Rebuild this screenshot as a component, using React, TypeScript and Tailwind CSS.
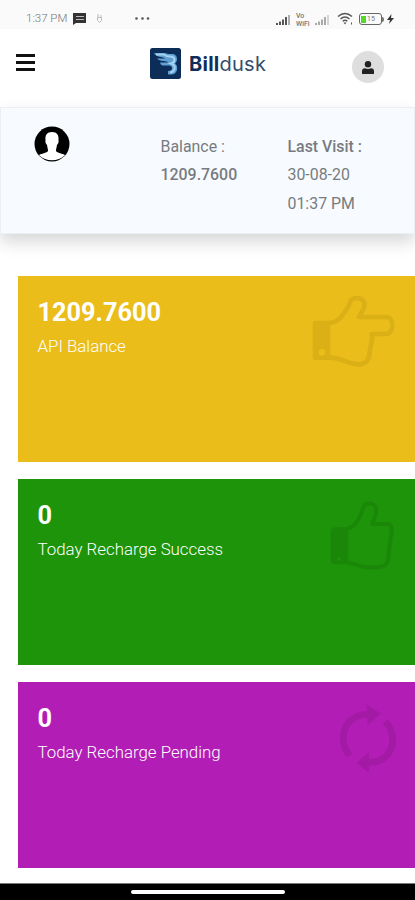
import React from 'react';

interface StatCardProps {
  value: string;
  label: string;
  className: string;
  children: React.ReactNode;
}

const StatCard: React.FC<StatCardProps> = ({ value, label, className, children }) => {
  return (
    <div className={`h-[186px] flex justify-between pl-5 pt-5 text-white ${className}`}>
      <div>
        <h2 className="text-[25.3px] leading-[34px] font-bold">{value}</h2>
        <p className="text-[16.85px] leading-[33px] font-light whitespace-nowrap">{label}</p>
      </div>
      {children}
    </div>
  );
};

const HandRightIcon = () => (
  <svg className="w-[83px] h-[71px] mr-5 text-[#dbb016]" viewBox="36 33 249 213" fill="none" stroke="currentColor">
    <path fill="currentColor" stroke="none" fillRule="evenodd" d="M46 107H91V225H46Q38 225 38 217V115Q38 107 46 107ZM66 192A10 10 0 1 0 66 212A10 10 0 1 0 66 192Z" />
    <path strokeWidth="14" strokeLinejoin="round" d="M90 113C117 112 126 92 142 70C151 57 149 39 171 39C190 40 198 54 191 70L177 96H258C270 96 277 106 277 121C277 139 268 147 256 147H215C221 165 211 180 210 195C209 218 202 236 182 238C150 240 120 217 90 218" />
  </svg>
);

const ThumbsUpIcon = () => (
  <svg className="w-[65px] h-[72px] mt-0.5 mr-5 text-[#1b8709]" viewBox="90 30 195 216" fill="none" stroke="currentColor">
    <path fill="currentColor" stroke="none" fillRule="evenodd" d="M108 109H145V220H104Q92 220 92 208V126Q92 109 108 109ZM117 197A6 6 0 1 0 117 209A6 6 0 1 0 117 197Z" />
    <path strokeWidth="12" strokeLinejoin="round" d="M142 112C166 108 176 87 182 70C190 59 187 38 205 37C228 36 232 57 226 75L216 99H261C274 99 277 110 275 124C270 142 272 158 267 176C264 192 268 215 253 224C235 233 218 228 199 229C180 229 165 216 142 215" />
  </svg>
);

const RefreshIcon = () => (
  <svg className="w-14 h-[69px] mt-0.5 mr-[19px] text-[#a31aa5]" viewBox="120 40 168 207" fill="none" stroke="currentColor">
    <path strokeWidth="20" d="M149 195C121 162 126 116 149 92C164 77 181 71 205 71M256 93C281 119 285 159 266 187C253 207 232 215 206 215" />
    <path fill="currentColor" stroke="none" d="M200 41L243 69L203 103ZM169 217L207 184V246Z" />
  </svg>
);

const Signal = ({ className }: { className: string }) => (
  <svg className={className} viewBox="0 0 16 12" fill="currentColor">
    <path d="M0 9h2v2H0zM3 7.5h2V11H3zM6 5.5h2V11H6zM9 3h2v8H9z" />
    <path opacity=".45" d="M12 1h2v10h-2z" />
  </svg>
);

const StatusBar = () => (
  <div className="h-[29px] bg-[#fafafa] flex items-start pt-3 text-[#555]">
    <span className="ml-[26px] w-[42px] text-[11.5px] leading-[13px] text-[#777] font-light whitespace-nowrap">1:37 PM</span>
    <svg className="ml-[5px] mt-[1px] w-[13px] h-3" viewBox="0 0 13 12">
      <path fill="#333" d="M0 0h13v10H3l-3 2z" />
      <path stroke="#bbb" d="M3 3.5h8M3 6.5h8" />
    </svg>
    <svg className="ml-[10px] mt-[2px] w-[7px] h-[9px]" viewBox="0 0 7 9" fill="none" stroke="#bbb">
      <path d="M2 0v3M5 1v2M1.5 3.5h4v3l-2 2-2-2z" />
    </svg>
    <svg className="ml-[32px] mt-[5px] w-[15px] h-[3px]" viewBox="0 0 15 3" fill="#555">
      <circle cx="1.5" cy="1.5" r="1.3" />
      <circle cx="7.5" cy="1.5" r="1.3" />
      <circle cx="13" cy="1.5" r="1.3" />
    </svg>
    <Signal className="ml-[126px] mt-[2px] w-4 h-3 shrink-0" />
    <div className="ml-[4px] w-[15px] flex flex-col text-[7px] leading-[8px] font-medium text-[#777]">
      <span>Vo</span>
      <span>WiFi</span>
    </div>
    <Signal className="ml-[4px] mt-[2px] w-4 h-3 shrink-0 text-[#aaa]" />
    <svg className="ml-[6px] w-4 h-[14px] shrink-0" viewBox="0 0 16 14" fill="none" stroke="#555" strokeWidth="1.4">
      <path d="M1 4.5Q8-1.5 15 4.5M3.5 7Q8 3 12.5 7M5.7 9.2Q8 7.2 10.3 9.2" />
      <path fill="#555" stroke="none" d="M6.5 10.5h3L8 12.5z" />
      <path strokeWidth="1" d="M14.5 10.5v2" />
    </svg>
    <div className="ml-[6px] mt-[1px] w-[23px] h-3 shrink-0 border-[1.5px] border-[#666] rounded-[3px] flex items-center">
      <span className="ml-px w-[5px] h-[7px] bg-[#55d827]" />
      <span className="text-[7px] leading-[8px] text-[#777] ml-px">15</span>
    </div>
    <span className="mt-[5px] w-[2px] h-[5px] bg-[#777] rounded-r-sm" />
    <svg className="ml-[3px] mt-[1px] w-[7px] h-3 shrink-0" viewBox="0 0 7 12" fill="#333">
      <path d="M4.5 1L0 7h3L2 11l5-6H4z" />
    </svg>
  </div>
);

const Logo = () => (
  <div className="flex items-center">
    <svg className="w-[31px] h-[31px]" viewBox="0 0 31 31">
      <rect width="31" height="31" rx="2.5" fill="#0c2d57" />
      <path fill="#5f9fd2" d="M4 5H14C16 5 17 6 19 6H22C25 6 27 8 27 11C27 13 26 14.5 25 15.5C27 17 27.5 19 27 22C26 25 24 26.5 21 26.5H18V23C21 23 22 22 22 20C22 18 20 17.5 18 17.5H13C11 17.5 10.5 16 10 14.5H18C18 12.5 9 14 7 10.5H15C13 8.5 6 9.5 4 5Z" />
      <path fill="none" stroke="#a4d2f0" strokeWidth="2" d="M6 6.5H14Q17 9 21 8.5Q24.5 9 24.5 12Q24 15 21 15.5Q25 17 24.7 20Q24 24 20 24.5" />
    </svg>
    <span className="ml-[8px] font-['Inter',sans-serif] text-[20px] leading-[24px] tracking-[0.25px] text-[#344d6b]">
      <b className="font-bold text-[#102e5a]">Bill</b>dusk
    </span>
  </div>
);

const Header = () => (
  <header className="h-[78px] bg-white flex items-start pt-[19px]">
    <button className="ml-4 mt-[6px] w-[19px] flex flex-col gap-1" aria-label="Menu">
      <span className="h-[3px] w-full bg-[#111]" />
      <span className="h-[3px] w-full bg-[#111]" />
      <span className="h-[3px] w-full bg-[#111]" />
    </button>
    <div className="ml-[115px] w-[202px]">
      <Logo />
    </div>
    <div className="mt-[3px] w-8 h-8 rounded-full bg-[#dedede] flex items-center justify-center">
      <svg className="w-3 h-[13px]" viewBox="0 0 12 13" fill="#222">
        <circle cx="6" cy="3.2" r="3.2" />
        <path d="M0 13V10.5Q0 7.3 3 7.3Q6 8.6 9 7.3Q12 7.3 12 10.5V13Z" />
      </svg>
    </div>
  </header>
);

const AccountPanel = () => (
  <section className="h-[127px] bg-[#f7fbff] border border-[#eceff2] shadow-[0_8px_16px_rgba(0,0,0,0.16)] flex text-[15.9px] leading-[28.5px] text-[#777b80]">
    <div className="w-[159.5px] pl-[33px] pt-[18px]">
      <svg className="w-9 h-9" viewBox="0 0 36 36">
        <circle cx="18" cy="18" r="17.5" fill="#000" />
        <path fill="#fff" d="M18 6C23 6 25 9 24.5 14C25 16 24 18 23 19C22.5 22 22 23 22 25C23 27 29 27.5 31 29.2C24 36 12 36 5 29.2C7 27.5 13 27 14 25C14 23 13.5 22 13 19C12 18 11 16 11.5 14C11 9 13 6 18 6Z" />
      </svg>
    </div>
    <div className="w-[127px] pt-[24.5px]">
      <p>Balance :</p>
      <p className="font-medium">1209.7600</p>
    </div>
    <div className="pt-[24.5px]">
      <p className="font-medium">Last Visit :</p>
      <p>30-08-20</p>
      <p>01:37 PM</p>
    </div>
  </section>
);

export default function App() {
  return (
    <div className="h-[900px] flex flex-col overflow-hidden bg-white font-['Roboto',sans-serif]">
      <StatusBar />
      <Header />
      <AccountPanel />
      <main className="flex-1 mt-[41.5px] pl-[17.5px] flex flex-col gap-[17px]">
        <StatCard value="1209.7600" label="API Balance" className="bg-[#eabd1b]">
          <HandRightIcon />
        </StatCard>
        <StatCard value="0" label="Today Recharge Success" className="bg-[#1d940a]">
          <ThumbsUpIcon />
        </StatCard>
        <StatCard value="0" label="Today Recharge Pending" className="bg-[#b21db6]">
          <RefreshIcon />
        </StatCard>
      </main>
      <footer className="h-[17px] shrink-0 bg-black border-t border-[#777] flex justify-center pt-[6px]">
        <div className="w-[154px] h-[4px] rounded-full bg-white" />
      </footer>
    </div>
  );
}
